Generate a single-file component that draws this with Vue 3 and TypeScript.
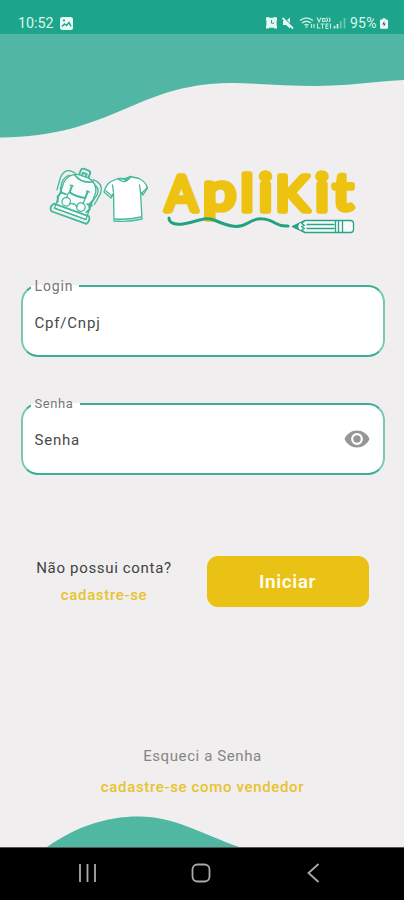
<script setup lang="ts">
import { ref } from 'vue'

interface LogoGlyph {
  char: string
  x: number
  y: number
  width: number
  size: number
}

const login = ref('')
const password = ref('')
const passwordVisible = ref(false)

const glyphs: LogoGlyph[] = [
  { char: 'A', x: 17.5, y: 54.5, width: 32, size: 48 },
  { char: 'p', x: 55, y: 54, width: 33, size: 52 },
  { char: 'l', x: 92.5, y: 54.5, width: 13, size: 51 },
  { char: 'i', x: 110.5, y: 54.5, width: 14, size: 53 },
  { char: 'K', x: 127.5, y: 54.5, width: 33.5, size: 48 },
  { char: 'i', x: 167, y: 54.5, width: 14, size: 53 },
  { char: 't', x: 185, y: 54, width: 20, size: 51 },
]
</script>

<template>
  <div class="phone">
    <header class="status">
      <span class="clock">10:52</span>
      <svg class="picture" width="13" height="13" viewBox="0 0 13 13">
        <rect width="13" height="13" rx="2.5" fill="#e9fbf6" />
        <path d="M2 9.500 4.500 7l2 1.500 2.500-3 2 4" fill="none" stroke="#1fa58b" stroke-width="1.500" />
        <circle cx="4" cy="3.500" r="1.100" fill="#1fa58b" />
      </svg>
      <svg class="signals" width="80" height="14" viewBox="0 0 80 14">
        <path d="M0 1.500 2.500 1l1 .8h4l1-.8 2.500.5V4l-.4 1v4l.4 1v2.500H8.500l-1-.7h-4l-1 .7H0V10l.4-1V5L0 4z" fill="#e4f9f3" />
        <path d="M5.500 4v3.200H8" fill="none" stroke="#1fa58b" stroke-width="1" />
        <path d="M17 5h3l4-3.500v11L20 9h-3z" fill="#e4f9f3" />
        <path d="m17.500 1.500 10 10" stroke="#1ca58a" stroke-width="1.500" />
        <path d="m16.500 2 10.500 10.500" stroke="#e4f9f3" stroke-width="1.800" />
        <g fill="none" stroke="#c4ecdf" stroke-width="1.500">
          <path d="M34 4.500q6.500-5 13 0M36 7q4.500-3.500 9 0M38.500 9.200q2-1.500 4 0M39.500 11h2" />
          <path d="M45.500 8v4M48 8v4" stroke-width="1.200" />
          <path d="M51 1.500 53 6l2-4.500M56.500 2.500h2.500v3h-2.500zM60.500 1.500q2 2.300 0 4.500M63 1.500q2 2.300 0 4.500" stroke-width="1.100" />
          <path d="M51.500 7.500v4.500h3M54.500 8h4M56.500 8v4.500M62.500 8H60v4.500h2.500M60 10h2.500M64.500 7.500v5" stroke-width="1.100" />
        </g>
        <path d="M68.500 10v2.500M71.500 8v4.500" stroke="#d9f5ed" stroke-width="1.700" />
        <path d="M74.800 5v7.500M78.500 2v10.500" stroke="#6fc7b4" stroke-width="1.700" />
      </svg>
      <span class="charge">95%</span>
      <svg class="battery" width="8" height="11" viewBox="0 0 9 12">
        <path d="M3 0h3v1.500h1.500Q9 1.500 9 3v7.500Q9 12 7.500 12h-6Q0 12 0 10.500V3q0-1.500 1.500-1.500H3z" fill="#f0fffb" />
        <path d="M5 3 2.500 7h2L4 10l2.600-4H4.700z" fill="#28635a" />
      </svg>
    </header>

    <main class="screen">
      <svg class="wave" width="404" height="104" viewBox="0 0 404 104">
        <path d="M0 0H404V46C370 48 345 52 315 52C285 52 255 49 230 49C135 50 112 103 0 103.500Z" fill="#51b7a4" />
      </svg>
      <svg class="wave wave-bottom" width="404" height="31" viewBox="0 0 404 31">
        <path d="M47 31C76 11 105 .5 139 .5C175 .5 202 18 239 31Z" fill="#4fb7a2" />
      </svg>

      <svg class="logo" width="310" height="80" viewBox="0 0 310 80" role="img" aria-label="ApliKit">
        <g fill="none" stroke="#43b899" stroke-width="1.300" stroke-linecap="round" stroke-linejoin="round">
          <g transform="translate(29 39) rotate(20) scale(.98 1)">
            <path fill="#f9fbfa" d="M-17 20V-8Q-15-18-5-20H5Q15-18 17-9V20Z" />
            <path stroke-width="1.900" d="M-5-20v-5q0-2 3-2h4q3 0 3 2v5M-2-20v-3h4v3" />
            <path d="M-9-20q-12-3-13 9L-21 2M10-20q12 0 12 11L20 3M-14-16q-5 3-5 10L-17 2M15-15q5 2 4 9L17 1" />
            <path stroke-width="1.700" d="M-19 16H19Q22 20 19 24H-19Q-23 20-19 16M-9-18Q0-12 11-18" />
            <path stroke-dasharray="3 1.500" d="M-17 20H17" />
            <path stroke-width="2" d="M-8 0Q0 2 9 0M-8-7v6M9-7v6" />
            <path d="M-10-7h3M8-7h3M-9 1v5M9 1v5" />
            <path stroke-width="1.900" d="M-18-1l2 4-2 5 2 5M17 0l-2 5 2 4-2 4M-15 3h4M13 5h5" />
            <circle cx="-8" cy="10" r="4.300" />
            <circle cx="8" cy="10" r="4.300" />
            <path d="M-4 11q4-3 8 0" />
          </g>
          <path fill="#fdfefd" d="M70 22.500 62 26Q58 29 56 36L63 42 65.500 37 66 65Q80 66.500 94 63L92.500 36 95 39 99.500 32Q98 26 91 22.500L82 20.500Q76 24 70 22.500Z" />
          <path d="M70 22.500q6 7 13-2M73 22q4.500 3 8 0M65.500 36l-1-7M92.500 36l-1-7M58 35l6 5M94 37l5-5M67 63q13 1 26-2" />
        </g>
        <g class="wordmark" transform="translate(100 0)">
          <text
            v-for="(glyph, index) in glyphs"
            :key="index"
            :x="glyph.x"
            :y="glyph.y"
            :font-size="glyph.size"
            :textLength="glyph.width"
            lengthAdjust="spacingAndGlyphs"
          >{{ glyph.char }}</text>
        </g>
        <path
          d="M121 62C121 67 127 69 135 68C150 66 156 60 166 64C178 69 189 74 200 67C209 61 219 62 227 67C234 71 238 70 240 70"
          fill="none" stroke="#23a181" stroke-width="3" stroke-linecap="round"
        />
        <g transform="translate(244.500 64)" fill="none" stroke="#2aa486" stroke-width="1.300" stroke-linejoin="round">
          <path fill="#f7faf8" d="M0 6.500 12 .5H58Q61 .5 61 3.500V9.500Q61 12.500 58 12.500H12Z" />
          <path fill="#23a181" d="M0 6.500 6 4 5 6.500l1 3z" />
          <path d="M12 1 9 3.500l3 2-3 1 3 2-3 1.500 3 2M14 4.500h28M14 8.500h28M43 1v11M46 1v11M50 1v11" />
        </g>
      </svg>

      <form class="form" @submit.prevent>
        <fieldset class="field">
          <legend>Login</legend>
          <input v-model="login" type="text" placeholder="Cpf/Cnpj" aria-label="Login" />
        </fieldset>
        <fieldset class="field">
          <legend class="tight">Senha</legend>
          <input v-model="password" :type="passwordVisible ? 'text' : 'password'" placeholder="Senha" aria-label="Senha" />
          <button class="eye" type="button" @click="passwordVisible = !passwordVisible">
            <svg width="26" height="18" viewBox="0 0 26 18">
              <path d="M.5 9C3 3.500 7.500.5 13 .5S23 3.500 25.500 9C23 14.500 18.500 17.500 13 17.500S3 14.500 .5 9Z" fill="#969696" />
              <circle cx="13" cy="9" r="4.800" fill="#969696" stroke="#fff" stroke-width="2.200" />
            </svg>
          </button>
        </fieldset>

        <div class="actions">
          <div class="signup">
            <span class="question">Não possui conta?</span>
            <a class="link">cadastre-se</a>
          </div>
          <button class="start" type="submit">Iniciar</button>
        </div>
      </form>

      <div class="extras">
        <span class="forgot">Esqueci a Senha</span>
        <a class="link seller">cadastre-se como vendedor</a>
      </div>
    </main>

    <nav class="navbar">
      <svg width="20" height="20" viewBox="0 0 20 20"><path d="M2 1v18M9.500 1v18M17 1v18" /></svg>
      <svg width="20" height="20" viewBox="0 0 20 20"><rect x="1.500" y="1.500" width="17" height="17" rx="5" /></svg>
      <svg width="20" height="20" viewBox="0 0 20 20"><path d="M14.500 1 4.500 10l10 9" /></svg>
    </nav>
  </div>
</template>

<style>
body {
  margin: 0;
  background: #f0eeee;
}
</style>

<style scoped>
.phone {
  display: flex;
  flex-direction: column;
  width: 404px;
  height: 900px;
  overflow: hidden;
  background: #f0eeee;
  font-family: Roboto, sans-serif;
}

.status {
  display: flex;
  align-items: center;
  box-sizing: border-box;
  height: 34px;
  padding: 12px 16px 0 18px;
  background: #1ca58a;
  color: #dcf7ef;
  font-size: 14.3px;
}

.clock {
  width: 36px;
  white-space: nowrap;
}

.picture {
  margin-left: 6px;
}

.signals {
  margin-left: auto;
}

.charge {
  width: 28px;
  margin: 0 2px 0 4px;
  font-size: 14px;
  letter-spacing: 0.2px;
}

.screen {
  position: relative;
  display: flex;
  flex: 1;
  flex-direction: column;
  align-items: center;
}

.wave {
  position: absolute;
  top: 0;
  left: 0;
}

.wave-bottom {
  top: auto;
  bottom: 0;
}

.logo {
  position: relative;
  margin-top: 122px;
  margin-left: 1px;
}

.wordmark {
  fill: #edc211;
  stroke: #edc211;
  stroke-width: 5.6;
  stroke-linejoin: round;
  font-family: Lato, sans-serif;
  font-weight: 400;
}

.form {
  display: flex;
  flex-direction: column;
  width: 364px;
  margin-top: 41px;
  margin-left: 1px;
}

.field {
  display: flex;
  align-items: center;
  box-sizing: border-box;
  height: 80px;
  margin: 0 0 37.5px;
  padding: 0 13px 0 12px;
  border: 2px solid;
  border-color: #3cae95 #7ac8b4;
  border-radius: 17px;
  background: #fff;
}

.field legend {
  height: 18px;
  margin-left: -4px;
  padding: 0 6px 0 4px;
  color: #777;
  font-size: 14px;
  line-height: 18px;
  letter-spacing: 0.85px;
}

.field legend.tight {
  font-size: 13px;
  letter-spacing: 0.6px;
}

.field input {
  flex: 1;
  min-width: 0;
  height: 55px;
  padding: 0;
  border: 0;
  outline: 0;
  background: transparent;
  font: 15px Roboto, sans-serif;
  letter-spacing: 0.8px;
}

.field input::placeholder {
  color: #484848;
  opacity: 1;
}

.eye {
  display: flex;
  margin-top: -2px;
  padding: 0;
  border: 0;
  background: none;
}

.actions {
  display: flex;
  align-items: center;
  margin-top: 44px;
}

.signup {
  display: flex;
  flex-direction: column;
  gap: 4px;
  width: 167px;
  text-align: center;
  font-size: 15px;
  line-height: 23px;
}

.question {
  color: #424242;
  letter-spacing: 0.67px;
}

.link {
  color: #e8c32c;
  font-size: 15px;
  font-weight: 500;
  letter-spacing: 0.65px;
}

.start {
  width: 162px;
  height: 51px;
  margin-left: 19px;
  padding: 0 0 1px;
  border: 0;
  border-radius: 11px;
  background: #eac215;
  color: #fffdf0;
  font: 600 19px Roboto, sans-serif;
  letter-spacing: 0.6px;
}

.extras {
  display: flex;
  flex-direction: column;
  gap: 8px;
  margin-top: 138px;
  margin-left: 1px;
  text-align: center;
  line-height: 23px;
}

.forgot {
  color: #858585;
  font-size: 15px;
  letter-spacing: 0.6px;
}

.navbar {
  display: flex;
  align-items: center;
  justify-content: space-between;
  box-sizing: border-box;
  height: 53px;
  padding: 0 80px 2px 78px;
  border-top: 1px solid #555;
  background: #000;
}

.navbar svg {
  fill: none;
  stroke: #aaa;
  stroke-width: 1.8;
}
</style>
